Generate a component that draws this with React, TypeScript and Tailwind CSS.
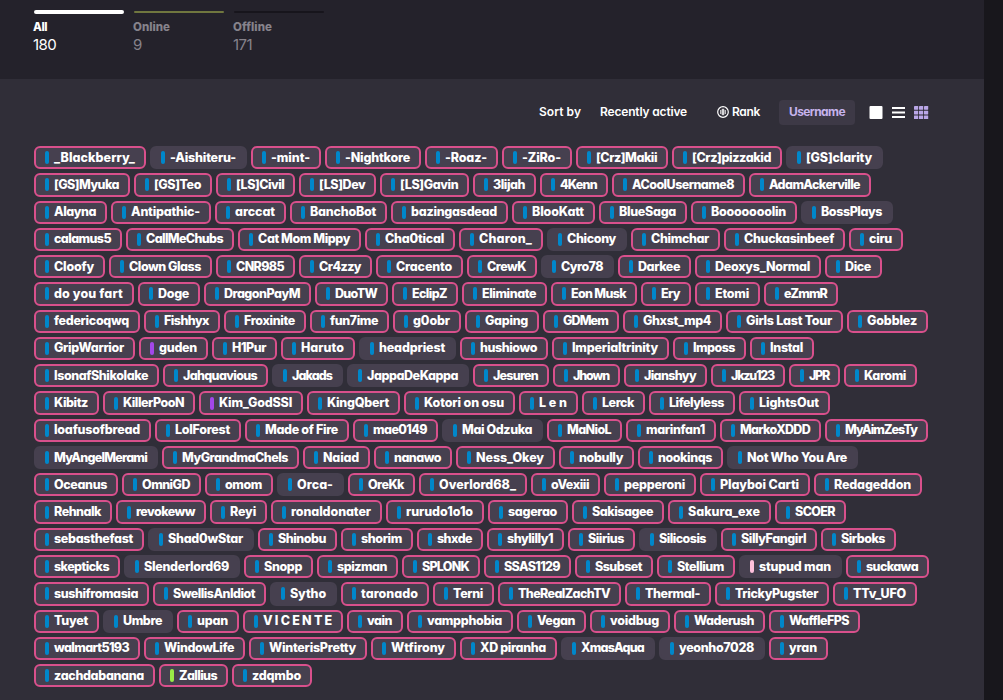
import React, { useLayoutEffect, useRef } from 'react';
import clsx from 'clsx';

type Flag = 'offline' | 'purple' | 'lime' | 'pink' | 'plain';
type User = [name: string, width: number, ...flags: Flag[]];

// "plain" cards have no friend border
const ROWS: User[][] = [
  [['_Blackberry_', 112], ['-Aishiteru-', 97, 'plain'], ['-mint-', 70], ['-Nightkore', 96], ['-Roaz-', 73], ['-ZiRo-', 70], ['[Crz]Makii', 92], ['[Crz]pizzakid', 110], ['[GS]clarity', 97, 'plain']],
  [['[GS]Myuka', 96], ['[GS]Teo', 78], ['[LS]Civil', 79], ['[LS]Dev', 77], ['[LS]Gavin', 89], ['3lijah', 63], ['4Kenn', 68], ['ACoolUsername8', 133], ['AdamAckerville', 122]],
  [['Alayna', 73], ['Antipathic-', 100], ['arccat', 71], ['BanchoBot', 97], ['bazingasdead', 117], ['BlooKatt', 83], ['BlueSaga', 88], ['Booooooolin', 106], ['BossPlays', 92, 'plain']],
  [['calamus5', 88], ['CallMeChubs', 108], ['Cat Mom Mippy', 123], ['Cha0tical', 90], ['Charon_', 84], ['Chicony', 80, 'plain'], ['Chimchar', 89], ['Chuckasinbeef', 121], ['ciru', 54]],
  [['Cloofy', 71], ['Clown Glass', 103], ['CNR985', 79], ['Cr4zzy', 73], ['Cracento', 87], ['CrewK', 70], ['Cyro78', 73, 'plain'], ['Darkee', 73], ['Deoxys_Normal', 126], ['Dice', 57]],
  [['do you fart', 100], ['Doge', 62], ['DragonPayM', 107], ['DuoTW', 73], ['EclipZ', 66], ['Eliminate', 85], ['Eon Musk', 86], ['Ery', 50], ['Etomi', 65], ['eZmmR', 74]],
  [['federicoqwq', 106], ['Fishhyx', 76], ['Froxinite', 82], ['fun7ime', 79], ['g0obr', 68], ['Gaping', 74], ['GDMem', 76], ['Ghxst_mp4', 99], ['Girls Last Tour', 117], ['Gobblez', 81]],
  [['GripWarrior', 101], ['guden', 69, 'purple'], ['H1Pur', 65], ['Haruto', 74], ['headpriest', 97, 'plain'], ['hushiowo', 88], ['Imperialtrinity', 117], ['Imposs', 73], ['Instal', 64]],
  [['IsonafShikolake', 125], ['Jahquavious', 105], ['Jakads', 71, 'plain'], ['JappaDeKappa', 122, 'plain'], ['Jesuren', 76], ['Jhown', 67], ['Jianshyy', 83], ['Jkzu123', 74], ['JPR', 51], ['Karomi', 73]],
  [['Kibitz', 65], ['KillerPooN', 92], ['Kim_GodSSI', 104, 'purple'], ['KingQbert', 93], ['Kotori on osu', 111], ['L e n', 59], ['Lerck', 63], ['Lifelyless', 86], ['LightsOut', 91]],
  [['loafusofbread', 117], ['LolForest', 86], ['Made of Fire', 104], ['mae0149', 85], ['Mai Odzuka', 101, 'plain'], ['MaNioL', 75], ['marinfan1', 90], ['MarkoXDDD', 101], ['MyAimZesTy', 103]],
  [['MyAngelMerami', 124, 'plain'], ['MyGrandmaChels', 137], ['Naiad', 67], ['nanawo', 78], ['Ness_Okey', 99], ['nobully', 75], ['nookinqs', 85], ['Not Who You Are', 131, 'plain']],
  [['Oceanus', 84], ['OmniGD', 79], ['omom', 68], ['Orca-', 67, 'plain'], ['OreKk', 67], ['Overlord68_', 108], ['oVexiii', 69], ['pepperoni', 92], ['Playboi Carti', 110], ['Redageddon', 108]],
  [['Rehnalk', 78], ['revokeww', 90], ['Reyi', 57], ['ronaldonater', 111], ['rurudo1o1o', 98], ['sagerao', 80], ['Sakisagee', 92], ['Sakura_exe', 103], ['SCOER', 71]],
  [['sebasthefast', 110], ['Shad0wStar', 106, 'plain'], ['Shinobu', 79], ['shorim', 72], ['shxde', 66], ['shylilly1', 77], ['Siirius', 67], ['Silicosis', 78, 'plain'], ['SillyFangirl', 96], ['Sirboks', 75]],
  [['skepticks', 86], ['Slenderlord69', 116, 'plain'], ['Snopp', 69], ['spizman', 81], ['SPLONK', 78], ['SSAS1129', 87], ['Ssubset', 78], ['Stellium', 78], ['stupud man', 103, 'pink', 'plain'], ['suckawa', 83]],
  [['sushifromasia', 115], ['SwellisAnIdiot', 113], ['Sytho', 67, 'plain'], ['taronado', 88], ['Terni', 61], ['TheRealZachTV', 123], ['Thermal-', 86], ['TrickyPugster', 114], ['TTv_UFO', 84]],
  [['Tuyet', 65], ['Umbre', 70, 'plain'], ['upan', 62], ['V I C E N T E', 100], ['vain', 56], ['vampphobia', 106], ['Vegan', 69], ['voidbug', 80], ['Waderush', 91], ['WaffleFPS', 91]],
  [['walmart5193', 106], ['WindowLife', 101], ['WinterisPretty', 118], ['Wtfirony', 85], ['XD piranha', 97], ['XmasAqua', 94, 'plain'], ['yeonho7028', 106, 'plain'], ['yran', 59]],
  [['zachdabanana', 121], ['Zallius', 69, 'lime'], ['zdqmbo', 80]],
];

function barColor(flags: Flag[]) {
  if (flags.includes('purple')) return 'bg-[#a347eb]';
  if (flags.includes('lime')) return 'bg-[#99eb47]';
  if (flags.includes('pink')) return 'bg-[#ffc0dc]';
  return 'bg-[#0087ca]';
}

// Spreads or tightens the letters so that the text spans the given width
function FitText({ text, width, className }: { text: string; width: number; className?: string }) {
  const ref = useRef<HTMLSpanElement>(null);

  useLayoutEffect(() => {
    const el = ref.current;
    if (!el) return;
    el.style.letterSpacing = '0px';
    const natural = el.getBoundingClientRect().width;
    el.style.letterSpacing = `${(width - natural) / text.length}px`;
  }, [text, width]);

  return (
    <span ref={ref} className={clsx('inline-block whitespace-pre', className)}>
      {text}
    </span>
  );
}

function UserCard({ user }: { user: User }) {
  const [name, width, ...flags] = user;
  return (
    <a
      className={clsx(
        'flex h-[23.27px] shrink-0 items-center rounded-[6px] border-2 bg-[#46404f] pl-[9px]',
        flags.includes('plain') ? 'border-[#46404f]' : 'border-[#d9508c]'
      )}
      style={{ width }}
    >
      <span className={clsx('mr-[5px] h-[13px] w-1 shrink-0 rounded-[2px]', barColor(flags))} />
      <FitText text={name} width={width - 31} className="text-[12.5px] leading-[18px] font-extrabold text-white" />
    </a>
  );
}

interface StatProps {
  label: string;
  count: number;
  width: number;
  bar: string;
  active?: boolean;
}

function Stat({ label, count, width, bar, active }: StatProps) {
  return (
    <div className={clsx('w-[90px]', active ? 'text-white' : 'text-[#86838b]')}>
      <div className="flex h-1 items-center">
        <div className={clsx('w-full rounded-full', active ? 'h-1' : 'h-0.5', bar)} />
      </div>
      <div className="mt-[5px] -ml-px h-4 text-[11.5px] leading-4 font-extrabold">
        <FitText text={label} width={width} />
      </div>
      <div className="-ml-px h-[19px] text-[15px] leading-[19px] tracking-[-0.6px]">{count}</div>
    </div>
  );
}

function RankIcon() {
  return (
    <svg className="mr-[3px] h-3 w-3" viewBox="0 0 12 12" fill="none">
      <circle cx="6" cy="6" r="5.3" stroke="white" strokeWidth="1.2" />
      <path d="M3.8 4v4M5.3 2.8v6.4M6.7 2.8v6.4M8.2 4v4" stroke="white" strokeWidth="1" />
    </svg>
  );
}

export default function App() {
  return (
    <div className="h-[700px] w-[1003px] overflow-hidden bg-[#18171c] font-[Inter,sans-serif] [font-feature-settings:'cv11']">
      <div className="flex h-full w-[984px] flex-col bg-[#302e38]">
        <header className="flex h-[79px] shrink-0 gap-[10px] bg-[#24222b] pt-[10px] pl-[34px]">
          <Stat label="All" count={180} width={14} bar="bg-white" active />
          <Stat label="Online" count={9} width={37} bar="bg-[#70773f]" />
          <Stat label="Offline" count={171} width={39} bar="bg-[#17151c]" />
        </header>

        <div className="mt-5 flex h-[26px] shrink-0 items-center pl-[539px] text-[12px] font-semibold text-white">
          <FitText text="Sort by" width={42} className="mr-[19px]" />
          <FitText text="Recently active" width={87} className="mr-[30px]" />
          <RankIcon />
          <FitText text="Rank" width={28} className="mr-[19px]" />
          <span className="mr-[14px] flex h-[25px] w-[76px] items-center justify-center rounded bg-[#3d3946] font-bold text-[#c6b3ec]">
            <FitText text="Username" width={56} />
          </span>
          <svg className="h-[13px] w-[60px]" viewBox="0 0 60 13">
            <rect x="0.5" width="13" height="13" rx="1" fill="white" />
            <path d="M23 2h13M23 6.5h13M23 11h13" stroke="white" strokeWidth="2" />
            <g fill="#b9a6e6">
              {[0, 4.7, 9.4].map((y) =>
                [45, 50, 55].map((x) => <rect key={`${x}-${y}`} x={x} y={y} width="4.2" height="3.7" rx="0.4" />)
              )}
            </g>
          </svg>
        </div>

        <div className="mt-[21px] flex flex-col gap-1 pl-[34px]">
          {ROWS.map((row, i) => (
            <div key={i} className="flex gap-1">
              {row.map((user) => (
                <UserCard key={user[0]} user={user} />
              ))}
            </div>
          ))}
        </div>
      </div>
    </div>
  );
}
